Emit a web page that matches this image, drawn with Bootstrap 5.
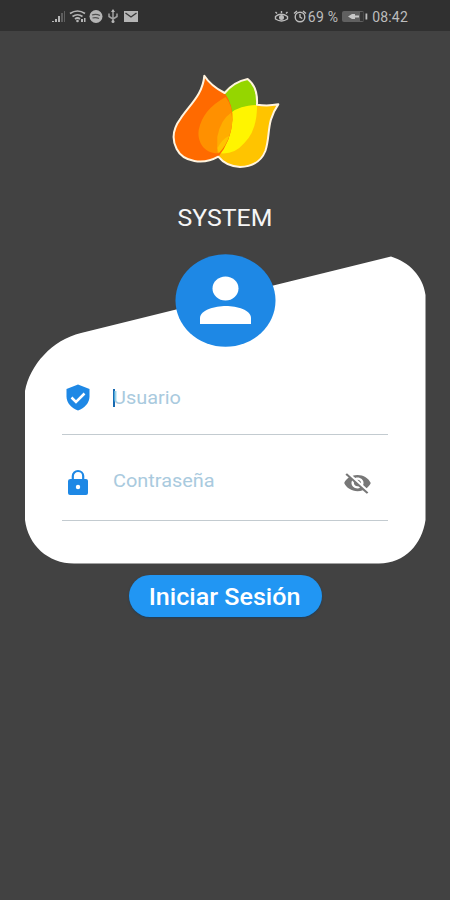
<!DOCTYPE html>
<html lang="es">
<head>
<meta charset="utf-8">
<meta name="viewport" content="width=device-width, initial-scale=1">
<title>System</title>
<link href="https://cdn.jsdelivr.net/npm/bootstrap@5.3.0/dist/css/bootstrap.min.css" rel="stylesheet">
<style>
body{background:#424242;font-family:Roboto,"Liberation Sans",sans-serif;height:900px;overflow:hidden}
.statusbar{height:31px;background:#303030;color:#bdbdbd;font-size:14px;line-height:32px;padding:1px 42px 0 51px}
.statusbar svg{display:block}
.stat-text{letter-spacing:.2px}
.logo{width:130px;height:110px;margin-top:34px}
.brand{font-size:23px;line-height:28px;margin-top:30px;color:#f5f5f5}
.brand span{display:inline-block;transform:scaleX(1.08)}
.panel{width:402px;height:310px;margin-top:21px;padding:117px 38px 0}
.avatar{top:0;left:151px;width:101px;height:93px;z-index:1}
.field{position:relative;z-index:1;border-bottom:1.5px solid #c3cbd0}
.field-user{height:64px}
.field-pass{height:86px}
.field-icon{width:30px;flex:none}
.field input{font-size:18px;line-height:24px;height:24px;width:180px;flex:none;margin-left:21px;caret-color:transparent;color:#1e88e5;transform:scaleX(1.105);transform-origin:left}
.field input::placeholder{color:#a9cade;opacity:1}
.field .user-input{margin-top:15px}
.field .pass-input{margin-top:34px}
.cursor-bar{width:2px;height:18px;background:#1769b0;left:51px;top:18px}
.eye{margin-top:35px;margin-right:16px;flex:none}
.login-btn{width:193px;height:42px;margin-top:11px;background:#2196f3;color:#fff;font-size:23px;font-weight:500;line-height:43px;box-shadow:0 1px 2px #1d3f5c}
.login-btn span{display:inline-block;transform:translateY(1px) scaleX(1.09)}
</style>
</head>
<body>
<header class="statusbar d-flex justify-content-between">
  <svg width="90" height="30" viewBox="0 0 90 30" fill="#b5b5b5">
    <path d="M1 20h2v1H1zM4 18h2v3H4zM7 15h2v6H7z"/><path d="M10 12h2v9h-2zM13 10h1v11h-1z" opacity=".35"/>
    <g fill="none" stroke="#b5b5b5" stroke-width="1.7"><path d="M19 12.500q7.500-5 15 0M21.500 15.500q5-3.500 10 0M24 18q2.500-2 5 0"/></g><circle cx="26.500" cy="20" r="1.300"/><path d="M30 18h2v3h-2zM33 17h1.500v4H33z"/>
    <circle cx="45" cy="15.500" r="6.500"/><path d="M41 14q4-1.500 8 .5M41.500 17q3.500-1 6.500.5" stroke="#505050" stroke-width="1.300" fill="none"/>
    <path d="M62 9v12M58 12.500v3l4 2.500 4-2.500v-3" fill="none" stroke="#a0a0a0" stroke-width="1.500"/><circle cx="62" cy="20.500" r="1.500"/><path d="M62 8l2 3h-4z"/>
    <path d="M73 10h14v11H73z"/><path d="M74.500 12l5.500 4 5.500-4" fill="none" stroke="#383838" stroke-width="1.400"/>
  </svg>
  <div class="d-flex stat-text">
    <svg width="35" height="30" viewBox="0 0 35 30" fill="none" stroke="#bdbdbd" stroke-width="1.400"><path d="M2.500 15.500q5.500-4.500 12 0v2.500q-6 4-12 0zM4 12.500L2.500 11M8.500 12V10M13 12.500l1.500-1.500"/><circle cx="8.500" cy="16.500" r="1.800" fill="#bdbdbd"/><circle cx="27" cy="16" r="4.800"/><path d="M27 13v3l2.300 1.500M21 12.500l3-2.500M33 12.500l-3-2.500"/></svg>
    <span>69 %</span>
    <svg class="ms-1 me-1" width="26" height="30" viewBox="0 0 26 30"><rect x="0" y="10" width="22" height="11" rx="2" fill="#606060"/><path d="M18 11h3.500v9H18z" fill="#353535"/><path d="M6 15.500l4-2.500h3v1.500h4v2h-4V18h-3z" fill="#c8c8c8"/><path d="M23.500 12.500h1.800v6h-1.800z" fill="#bdbdbd"/></svg>
    <span>08:42</span>
  </div>
</header>

<main class="d-flex flex-column align-items-center">
  <svg class="logo" viewBox="0 0 390 330">
    <path d="M192 82Q222 48 263 42Q294 66 291 119L215 190Z" fill="#95d600"/>
    <path d="M355 118Q323 126 290 120Q215 126 187 175Q158 225 172 268Q198 308 240 306Q298 304 316 258C332 210 318 170 355 118Z" fill="#ffc400"/>
    <path d="M291 120Q240 122 213 143Q182 210 174 264Q221 272 253 234Q292 195 291 120Z" fill="#fff500"/>
    <path d="M133 32Q152 62 194 84Q220 120 217 165Q213 230 175 275C130 300 70 292 50 252C36 225 38 192 62 160C90 118 128 90 133 32Z" fill="#ff6a00"/>
    <path d="M197 96Q127 134 116 196C111 234 136 267 176 265Q215 226 217 164Q219 125 197 96Z" fill="#ff9000"/>
    <path d="M213 143Q181 165 172 215V263Q217 218 217 163Z" fill="#ffad00"/>
    <path d="M172 232Q171 252 176 265Q199 240 208 212Q186 222 172 250Z" fill="#ffc400"/>
    <path d="M133 32Q152 62 194 84Q222 50 263 42Q294 66 291 119Q323 124 355 118C318 170 332 210 316 258Q298 304 240 306Q198 304 175 275C130 300 70 292 50 252C36 225 38 192 62 160C90 118 128 90 133 32Z" fill="none" stroke="#fff4df" stroke-width="6" stroke-linejoin="round"/>
  </svg>
  <h1 class="brand mb-0 fw-normal"><span>SYSTEM</span></h1>

  <form class="panel position-relative">
    <svg class="position-absolute top-0 start-0" width="402" height="310" viewBox="24 254 402 310"><path d="M25 391C30 365 52 340 81 333L391 256.500C409 262 423 276 425.500 295V520C422 544 405 563.500 379 563.500H74C48 563.500 28 545 25 520Z" fill="#fff"/></svg>
    <svg class="avatar position-absolute" viewBox="0 0 101 93"><ellipse cx="50.500" cy="46.500" rx="50" ry="46.300" fill="#1e88e5"/><ellipse cx="50.500" cy="34.500" rx="13" ry="12" fill="#fff"/><path d="M25 70V64C25 56 40 52 51 52S76 56 76 64V70Z" fill="#fff"/></svg>
    <div class="field field-user d-flex">
      <svg class="field-icon mt-2" height="40" viewBox="0 0 30 40"><path d="M16 5.500L27.500 10V17.500C27.500 24 22.500 29 16 31.500C9.500 29 4.500 24 4.500 17.500V10Z" fill="#1e88e5"/><path d="M9.500 18.500l4.500 4.500 8.500-8.500" fill="none" stroke="#fff" stroke-width="2.500"/></svg>
      <span class="cursor-bar position-absolute"></span>
      <input class="user-input border-0 p-0 bg-transparent" type="text" placeholder="Usuario" aria-label="Usuario">
    </div>
    <div class="field field-pass d-flex">
      <svg class="field-icon" height="85" viewBox="0 0 30 85"><path d="M8.500 44H24Q26 44 26 46V58Q26 60 24 60H8Q6 60 6 58V46Q6 44 8.500 44Z" fill="#1e88e5"/><path d="M10.800 45V41a5.200 5 0 0 1 10.400 0V45" fill="none" stroke="#1e88e5" stroke-width="2.200"/><circle cx="16" cy="52" r="2.200" fill="#fff"/></svg>
      <input class="pass-input border-0 p-0 bg-transparent" type="password" placeholder="Contraseña" aria-label="Contraseña">
      <svg class="eye ms-auto" width="29" height="26" viewBox="0 0 24 24" preserveAspectRatio="none" fill="#777"><path d="M12 7c2.760 0 5 2.240 5 5 0 .65-.13 1.260-.36 1.830l2.920 2.920c1.510-1.260 2.700-2.890 3.430-4.750-1.730-4.390-6-7.500-11-7.500-1.400 0-2.740.25-3.980.7l2.160 2.160C10.740 7.130 11.350 7 12 7zM2 4.270l2.280 2.280.46.46C3.080 8.300 1.780 10.020 1 12c1.730 4.390 6 7.500 11 7.500 1.550 0 3.030-.3 4.380-.84l.42.42L19.730 22 21 20.730 3.270 3 2 4.270zM7.530 9.800l1.550 1.550c-.05.21-.08.43-.08.65 0 1.660 1.340 3 3 3 .22 0 .44-.03.65-.08l1.550 1.550c-.67.33-1.410.53-2.200.53-2.760 0-5-2.240-5-5 0-.79.2-1.530.53-2.200zm4.310-.78l3.150 3.150.02-.16c0-1.660-1.340-3-3-3l-.17.01z"/></svg>
    </div>
  </form>
  <button class="login-btn border-0 rounded-pill p-0" type="button"><span>Iniciar Sesión</span></button>
</main>
<script src="https://cdn.jsdelivr.net/npm/bootstrap@5.3.0/dist/js/bootstrap.bundle.min.js"></script>
</body>
</html>
